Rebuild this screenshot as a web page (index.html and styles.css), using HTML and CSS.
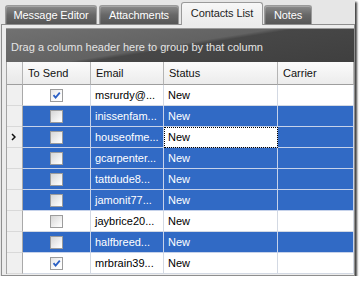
FILE: index.html
```html
<!DOCTYPE html>
<html>
<head>
<meta charset="utf-8">
<link rel="stylesheet" href="styles.css">
</head>
<body>
<div class="window">
  <div class="tabs">
    <div class="tab tab-editor">Message Editor</div>
    <div class="tab tab-attach">Attachments</div>
    <div class="tab tab-contacts active">Contacts List</div>
    <div class="tab tab-notes">Notes</div>
  </div>
  <div class="page">
    <div class="group">Drag a column header here to group by that column</div>
    <div class="grid">
      <div class="row head">
        <div class="cell ind"></div>
        <div class="cell">To Send</div>
        <div class="cell">Email</div>
        <div class="cell">Status</div>
        <div class="cell">Carrier</div>
      </div>
      <div class="row">
        <div class="cell ind"></div>
        <div class="cell chk"><span class="box checked"><svg viewBox="0 0 11 11" width="11" height="11"><path d="M2.5 5.2 L4.6 7.6 L8.8 2.6" fill="none" stroke="#2a5fc4" stroke-width="1.8"/></svg></span></div>
        <div class="cell">msrurdy@...</div>
        <div class="cell">New</div>
        <div class="cell"></div>
      </div>
      <div class="row sel">
        <div class="cell ind"></div>
        <div class="cell chk"><span class="box"></span></div>
        <div class="cell">inissenfam...</div>
        <div class="cell">New</div>
        <div class="cell"></div>
      </div>
      <div class="row sel">
        <div class="cell ind"><svg class="arrow" viewBox="0 0 5 8" width="5" height="8"><path d="M1 1 L4 4 L1 7" fill="none" stroke="#111" stroke-width="1.5"/></svg></div>
        <div class="cell chk"><span class="box"></span></div>
        <div class="cell">houseofme...</div>
        <div class="cell focus">New</div>
        <div class="cell"></div>
      </div>
      <div class="row sel">
        <div class="cell ind"></div>
        <div class="cell chk"><span class="box"></span></div>
        <div class="cell">gcarpenter...</div>
        <div class="cell">New</div>
        <div class="cell"></div>
      </div>
      <div class="row sel">
        <div class="cell ind"></div>
        <div class="cell chk"><span class="box"></span></div>
        <div class="cell">tattdude8...</div>
        <div class="cell">New</div>
        <div class="cell"></div>
      </div>
      <div class="row sel">
        <div class="cell ind"></div>
        <div class="cell chk"><span class="box"></span></div>
        <div class="cell">jamonit77...</div>
        <div class="cell">New</div>
        <div class="cell"></div>
      </div>
      <div class="row">
        <div class="cell ind"></div>
        <div class="cell chk"><span class="box"></span></div>
        <div class="cell">jaybrice20...</div>
        <div class="cell">New</div>
        <div class="cell"></div>
      </div>
      <div class="row sel">
        <div class="cell ind"></div>
        <div class="cell chk"><span class="box"></span></div>
        <div class="cell">halfbreed...</div>
        <div class="cell">New</div>
        <div class="cell"></div>
      </div>
      <div class="row">
        <div class="cell ind"></div>
        <div class="cell chk"><span class="box checked"><svg viewBox="0 0 11 11" width="11" height="11"><path d="M2.5 5.2 L4.6 7.6 L8.8 2.6" fill="none" stroke="#2a5fc4" stroke-width="1.8"/></svg></span></div>
        <div class="cell">mrbrain39...</div>
        <div class="cell">New</div>
        <div class="cell"></div>
      </div>
    </div>
  </div>
</div>
</body>
</html>
```

FILE: styles.css
```css
html, body {
  margin: 0;
  background: #ffffff;
}
body {
  font-family: "Liberation Sans", Arial, sans-serif;
  font-size: 11px;
  color: #000;
}
.window {
  width: 355px;
  background: #e6e6e6;
  box-shadow: 2px 2px 2px rgba(0, 0, 0, 0.75);
}
.tabs {
  display: flex;
  align-items: flex-end;
  height: 24px;
  padding-left: 5px;
  box-sizing: border-box;
}
.tab {
  height: 19px;
  box-sizing: border-box;
  border: 1px solid #9a9a9a;
  border-bottom: 0;
  border-radius: 3px 3px 0 0;
  background: linear-gradient(#8c8c8c, #676767 50%, #575757);
  box-shadow: inset 0 1px 0 rgba(255, 255, 255, 0.25), inset 1px 0 0 rgba(255, 255, 255, 0.12);
  color: #ffffff;
  display: flex;
  align-items: center;
  justify-content: center;
  margin-right: 2px;
  white-space: nowrap;
  letter-spacing: -0.1px;
}
.tab-editor { width: 92px; }
.tab-attach { width: 80px; }
.tab-contacts { width: 82px; margin-right: 1px; }
.tab-notes { width: 48px; }
.tab.active {
  height: 23px;
  margin-bottom: -1px;
  position: relative;
  z-index: 1;
  background: linear-gradient(#f7f7f7, #ebebeb);
  box-shadow: none;
  color: #1e1e1e;
  padding-bottom: 2px;
}
.page {
  margin-left: 1px;
  border: 1px solid #8e8e8e;
  padding: 3px 0 1px 4px;
  background: #ececec;
}
.group {
  height: 34px;
  box-sizing: border-box;
  padding: 12px 0 0 5px;
  line-height: 13px;
  color: #e4e4e4;
  border-top: 1px solid #9a9a9a;
  background: linear-gradient(171deg, #717171 0%, #626262 48%, #474747 52%, #3f3f3f 100%);
  white-space: nowrap;
}
.grid {
  border-left: 1px solid #a3a3a3;
  background: #fff;
}
.row {
  display: grid;
  grid-template-columns: 16px 68px 73px 114px 76px;
  height: 21px;
}
.cell {
  box-sizing: border-box;
  border-right: 1px solid #d3d9e3;
  border-bottom: 1px solid #d3d9e3;
  padding-left: 4px;
  display: flex;
  align-items: center;
  white-space: nowrap;
  overflow: hidden;
  background: #ffffff;
}
.cell.ind {
  padding-left: 0;
  background: #f0f0f0;
  border-right-color: #a9a9a9;
  border-bottom-color: #d9d9d9;
  justify-content: center;
}
.row.head {
  height: 23px;
}
.row.head .cell {
  padding-left: 5px;
  background: linear-gradient(#fbfbfb, #ececec);
  border-right-color: #b4b4b4;
  border-bottom-color: #9e9e9e;
  color: #111;
}
.row.head .cell.ind {
  background: linear-gradient(#f6f6f6, #e8e8e8);
  border-right-color: #b4b4b4;
}
.row.sel .cell:not(.ind) {
  background: #316ac5;
  color: #ffffff;
  border-color: #c6d2ea;
}
.row.sel .cell.focus {
  background: #ffffff;
  color: #000;
  outline: 1px dotted #000;
  outline-offset: -1px;
}
.cell.chk {
  justify-content: center;
  padding-left: 0;
  padding-right: 1px;
}
.box {
  width: 13px;
  height: 13px;
  box-sizing: border-box;
  border: 1px solid #9c9c9c;
  background: linear-gradient(135deg, #d6d6d6, #f4f4f4 70%, #ffffff);
  display: flex;
  align-items: center;
  justify-content: center;
}
.box.checked {
  background: linear-gradient(135deg, #e4e4e4, #fbfbfb 60%, #ffffff);
}
.arrow {
  display: block;
  margin-left: -2px;
}
```
